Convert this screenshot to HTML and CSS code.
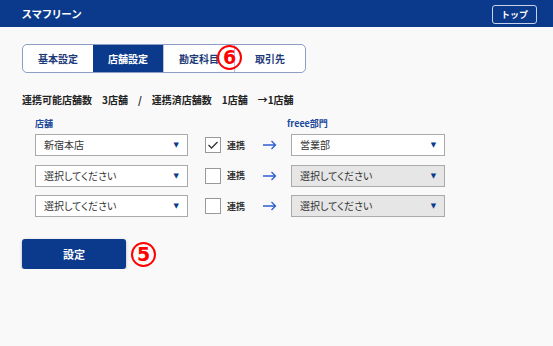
FILE: index.html
```html
<!DOCTYPE html>
<html>
<head>
    <title>スマフリーン</title>
    <link rel="stylesheet" href="styles.css">
</head>
<body>
    <div class="header">
        <span class="app-title">スマフリーン</span>
        <button class="top-button">トップ</button>
    </div>
    <div class="main">
        <div class="tabs">
            <div class="tab">基本設定</div>
            <div class="tab active">店舗設定</div>
            <div class="tab">勘定科目</div>
            <div class="tab">取引先</div>
            <span class="mark mark-tab">6</span>
        </div>
        <div class="stats">
            <span>連携可能店舗数</span><span>3店舗</span><span>/</span><span>連携済店舗数</span><span>1店舗</span><span>→1店舗</span>
        </div>
        <div class="row labels">
            <span class="col-label left-label">店舗</span>
            <span class="col-label right-label">freee部門</span>
        </div>
        <div class="row">
            <div class="select">新宿本店<span class="caret">▼</span></div>
            <span class="check checked">
                <svg width="12" height="10" viewBox="0 0 12 10"><polyline points="1.5,5 4.5,8 10.5,2" fill="none" stroke="#333" stroke-width="1.3"/></svg>
            </span>
            <span class="check-label">連携</span>
            <svg class="arrow" width="14" height="10" viewBox="0 0 14 10"><path d="M0 5 H12.5 M8.5 1 L12.5 5 L8.5 9" fill="none" stroke="#2f5fd0" stroke-width="1.3"/></svg>
            <div class="select right">営業部<span class="caret">▼</span></div>
        </div>
        <div class="row">
            <div class="select">選択してください<span class="caret">▼</span></div>
            <span class="check"></span>
            <span class="check-label">連携</span>
            <svg class="arrow" width="14" height="10" viewBox="0 0 14 10"><path d="M0 5 H12.5 M8.5 1 L12.5 5 L8.5 9" fill="none" stroke="#2f5fd0" stroke-width="1.3"/></svg>
            <div class="select right disabled">選択してください<span class="caret">▼</span></div>
        </div>
        <div class="row">
            <div class="select">選択してください<span class="caret">▼</span></div>
            <span class="check"></span>
            <span class="check-label">連携</span>
            <svg class="arrow" width="14" height="10" viewBox="0 0 14 10"><path d="M0 5 H12.5 M8.5 1 L12.5 5 L8.5 9" fill="none" stroke="#2f5fd0" stroke-width="1.3"/></svg>
            <div class="select right disabled">選択してください<span class="caret">▼</span></div>
        </div>
        <div class="submit-line">
            <button class="submit-button">設定</button>
            <span class="mark mark-submit">5</span>
        </div>
    </div>
</body>
</html>
```

FILE: styles.css
```css
body {
    margin: 0;
    background-color: #f9f9f9;
    font-family: "Noto Sans CJK JP", "Noto Sans", sans-serif;
    font-feature-settings: "palt";
    color: #333;
}

/* header bar */
.header {
    height: 27px;
    background-color: #0b3a8c;
    display: flex;
    align-items: center;
    justify-content: space-between;
    padding: 0 16px 0 22px;
}
.app-title {
    color: white;
    font-size: 10.5px;
    font-weight: bold;
    letter-spacing: 0.5px;
}
.top-button {
    width: 45px;
    height: 19px;
    margin-top: 1px;
    background: transparent;
    border: 1px solid #c8d2e8;
    border-radius: 3px;
    color: white;
    font-family: inherit;
    font-size: 9px;
    font-weight: bold;
    padding: 0;
}

.main {
    padding: 17px 0 0 22px;
}

/* tabs */
.tabs {
    position: relative;
    display: flex;
    width: 284px;
    height: 29px;
    border: 1px solid #8d9dc6;
    border-radius: 5px;
    box-sizing: border-box;
    background-color: white;
}
.tab {
    flex: 1;
    display: flex;
    align-items: center;
    justify-content: center;
    font-size: 10px;
    font-weight: bold;
    color: #1d3a78;
    border-left: 1px solid #b8c2dc;
}
.tab:first-child {
    border-left: none;
    border-radius: 4px 0 0 4px;
}
.tab.active {
    background-color: #0b3a8c;
    color: white;
    border-left: none;
}

/* red annotation marks */
.mark {
    position: absolute;
    width: 21px;
    height: 21px;
    border: 2.5px solid #f00;
    border-radius: 50%;
    color: #f00;
    font-family: "DejaVu Sans", sans-serif;
    font-size: 19px;
    font-weight: bold;
    line-height: 21px;
    text-align: center;
}
.mark-tab {
    left: 194px;
    top: 0px;
}
.mark-submit {
    left: 109px;
    top: 3px;
}

.stats {
    margin-top: 19px;
    display: flex;
    gap: 10px;
    font-size: 10px;
    font-weight: bold;
    color: #222;
}

/* rows */
.row {
    display: flex;
    align-items: center;
    padding-left: 13px;
    margin-bottom: 8.5px;
}
.row.labels {
    margin-top: 10px;
    margin-bottom: 4px;
}
.col-label {
    font-size: 9px;
    font-weight: bold;
    color: #1d4a9a;
}
.left-label {
    width: 252px;
}
.select {
    position: relative;
    width: 153px;
    height: 22px;
    box-sizing: border-box;
    border: 1px solid #aaa;
    background-color: white;
    padding-left: 8px;
    font-size: 10px;
    line-height: 20px;
    color: #333;
}
.select.right {
    width: 154px;
    margin-left: 14px;
}
.select.disabled {
    background-color: #e6e6e6;
}
.caret {
    position: absolute;
    right: 8px;
    top: 0;
    font-size: 7px;
    color: #0b3a8c;
    font-family: "DejaVu Sans", sans-serif;
}
.check {
    width: 16px;
    height: 16px;
    box-sizing: border-box;
    border: 1px solid #999;
    background-color: white;
    margin-left: 17px;
    display: flex;
    align-items: center;
    justify-content: center;
}
.check-label {
    margin-left: 6px;
    font-size: 9px;
    font-weight: bold;
    color: #333;
}
.arrow {
    margin-left: 18px;
}

.submit-line {
    position: relative;
    margin-top: 22px;
}
.submit-button {
    width: 104px;
    height: 30px;
    background-color: #0b3a8c;
    border: none;
    border-radius: 3px;
    box-shadow: 0 1px 3px rgba(0, 0, 0, 0.3);
    color: white;
    font-family: inherit;
    font-size: 11px;
    font-weight: bold;
}
```
